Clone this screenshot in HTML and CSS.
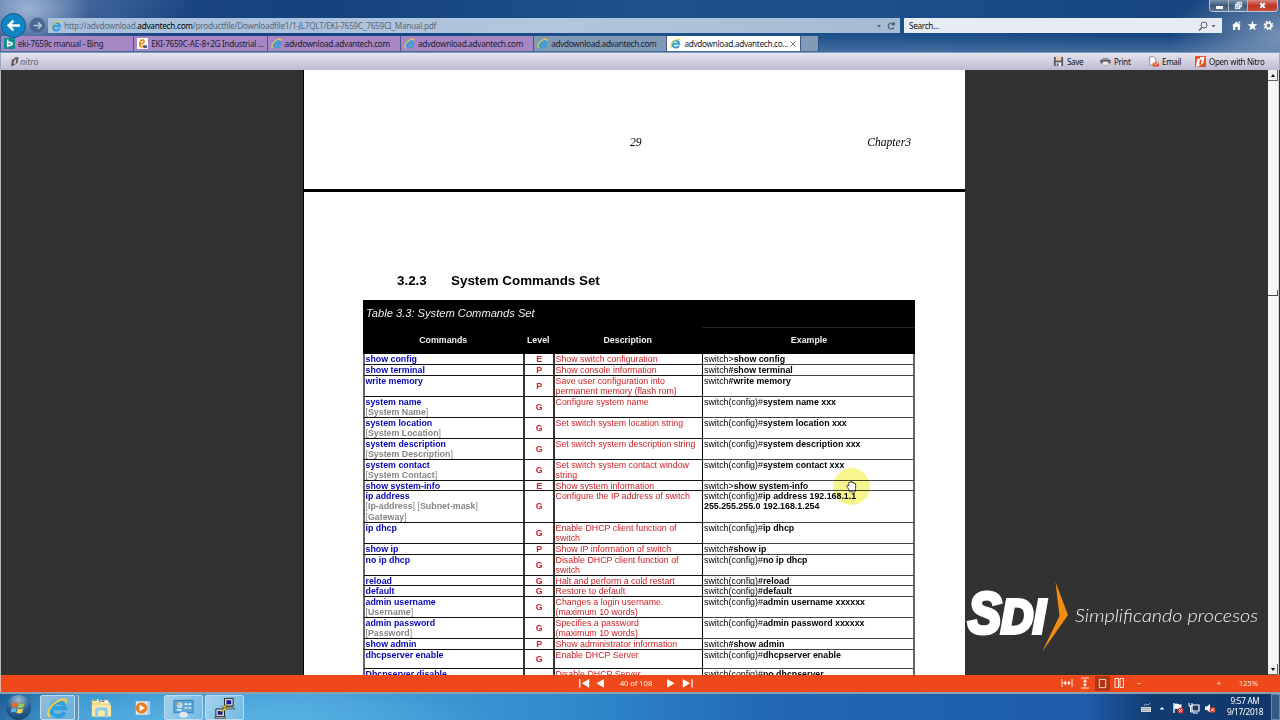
FILE: index.html
```html
<!DOCTYPE html>
<html lang="en">
<head>
  <meta charset="UTF-8" />
  <title>advdownload.advantech.com</title>
  <link rel="stylesheet" href="styles.css">
</head>
<body>
  <svg class="defs" width="0" height="0">
    <symbol id="ie" viewBox="0 0 24 24">
      <path d="M19.500 16.500a7.500 7.500 0 1 1 .6-4.200H7" fill="none" stroke="#2f9fdd" stroke-width="4.400"/>
      <path d="M4 21.500C-1 20 3 10 10.500 5.500 16 2 23 .5 21.500 6.500" fill="none" stroke="#f2cf45" stroke-width="2.300"/>
    </symbol>
    <symbol id="page-bars" viewBox="0 0 12 12">
      <path d="M5.500 1h5L9 8l-2.500 1L7.500 4H5zM2.500 3h3l-1 6H7l-3.500 2.500H1z" fill="currentColor"/>
    </symbol>
  </svg>

  <header class="chrome">
    <div class="caption">
      <div class="window-buttons">
        <span class="min"><i></i></span>
        <span class="restore"><svg viewBox="0 0 10 10"><path d="M3.500 1.500h5v5h-5zM1.500 3.500h5v5h-5z" fill="#8fa1b5" stroke="#fff"/></svg></span>
        <span class="close"><svg viewBox="0 0 10 10"><path d="M2.500 2.500l5 5m0-5l-5 5" stroke="#fff" stroke-width="2"/></svg></span>
      </div>
    </div>
    <div class="nav">
      <span class="back"><svg viewBox="0 0 24 24"><path d="M21 12H5m7-7l-7 7 7 7" fill="none" stroke="#fff" stroke-width="3.400"/></svg></span>
      <span class="forward"><svg viewBox="0 0 16 16"><path d="M4 8h8M8.500 4.500L12 8l-3.500 3.500" fill="none" stroke="#b9c9df" stroke-width="1.600"/></svg></span>
      <div class="address">
        <svg class="ie"><use href="#ie"/></svg>
        <span class="url">http://advdownload.<b>advantech.com</b>/productfile/Downloadfile1/1-JL7QLT/EKI-7659C_7659CI_Manual.pdf</span>
        <svg class="address-tools" viewBox="0 0 20 12"><path d="M1 5h4L3 7.500z" fill="#4c5a6a"/><path d="M17.500 4A3 3 0 1 0 18 7.200M18.200 2v2.700h-2.700" fill="none" stroke="#4c5a6a" stroke-width="1.200"/></svg>
      </div>
      <div class="search">
        <span>Search...</span>
        <svg viewBox="0 0 20 12"><circle cx="7" cy="5" r="3" fill="none" stroke="#56606b"/><path d="M5 7.500L2 10.500" stroke="#56606b" stroke-width="1.400"/><path d="M14.500 5h4l-2 2.500z" fill="#56606b"/></svg>
      </div>
      <div class="tools">
        <svg viewBox="0 0 12 12"><path d="M6 1.500l5 4.700H9.700V11H7.300V7.500H4.700V11H2.300V6.200H1zM8.500 1.500h1.500v2.500l-1.500-1z" fill="#fff"/></svg>
        <svg viewBox="0 0 12 12"><path d="M6 .8l1.400 3.700 4 .2-3.100 2.500 1 3.900L6 8.900l-3.300 2.200 1-3.900L.6 4.700l4-.2z" fill="#fff"/></svg>
        <svg viewBox="0 0 12 12"><circle cx="6" cy="6" r="4.500" fill="none" stroke="#fff" stroke-width="1.500" stroke-dasharray="1.800 1.734"/><circle cx="6" cy="6" r="3" fill="none" stroke="#fff" stroke-width="1.800"/></svg>
      </div>
    </div>
    <div class="tabs">
      <div class="tab"><svg viewBox="0 0 12 12"><path d="M0 0h12v12H0z" fill="#108b8b"/><path d="M4 1.500v7.300L8.800 7V5.500L5 4.500" fill="none" stroke="#fff" stroke-width="1.700"/></svg><span>eki-7659c manual - Bing</span></div>
      <div class="tab"><svg viewBox="0 0 12 12"><path d="M0 0h12v12H0z" fill="#fff"/><path d="M3 6.500C8 7 9 2 6 2S1.500 9 5 9.500c2 .2 3-1 4-1.500" fill="none" stroke="#ee8d16" stroke-width="1.800"/><path d="M7 8h4v3H7z" fill="#45608c"/></svg><span>EKI-7659C-AE-8+2G Industrial ...</span></div>
      <div class="tab"><svg><use href="#ie"/></svg><span>advdownload.advantech.com</span></div>
      <div class="tab"><svg><use href="#ie"/></svg><span>advdownload.advantech.com</span></div>
      <div class="tab other"><svg><use href="#ie"/></svg><span>advdownload.advantech.com</span></div>
      <div class="tab active"><svg><use href="#ie"/></svg><span>advdownload.advantech.co...</span><svg class="x" viewBox="0 0 8 8"><path d="M1.500 1.500l5 5m0-5l-5 5" stroke="#777"/></svg></div>
      <div class="new-tab"></div>
    </div>
  </header>

  <div class="nitro-bar">
    <svg class="nitro-logo"><use href="#page-bars"/></svg>
    <em>nitro</em>
    <div class="actions">
      <span class="save"><svg viewBox="0 0 12 12"><path d="M1 1h10v10H1z" fill="#5c5a60"/><path d="M3 1h6v4H3z" fill="#efc9a8"/><path d="M3 7h6v4H3z" fill="#f5f3f5"/><path d="M4 8h2v3H4z" fill="#5c5a60"/></svg>Save</span>
      <span class="print"><svg viewBox="0 0 12 12"><path d="M3 2h6v2H3z" fill="#999"/><path d="M.5 4h11v4h-11z" fill="#55535a"/><path d="M3 6h6v4H3z" fill="#f3eee8" stroke="#a88"  stroke-width=".5"/></svg>Print</span>
      <span class="email"><svg viewBox="0 0 12 12"><path d="M2 .8h4l2.500 2.500V10H2z" fill="#fff" stroke="#77737a" stroke-width=".8"/><path d="M5 7h7v4.500H5z" fill="#ef5125"/><path d="M5 7l3.500 2.500L12 7" fill="none" stroke="#fff" stroke-width=".7"/></svg>Email</span>
      <span class="open"><svg class="nitro-square"><use href="#page-bars"/></svg>Open with Nitro</span>
    </div>
  </div>

  <main class="viewer">
    <div class="document">
      <section class="page page-end"><span>29</span><span class="chapter">Chapter3</span></section>
      <section class="page page-start">
        <h1><span>3.2.3</span>System Commands Set</h1>
        <div class="commands">
          <div class="table-title">Table 3.3: System Commands Set</div>
          <div class="row head"><div>Commands</div><div>Level</div><div>Description</div><div>Example</div></div>
          <div class="row one"><div><b>show config</b></div><div>E</div><div>Show switch configuration</div><div>switch&gt;<b>show config</b></div></div>
          <div class="row one"><div><b>show terminal</b></div><div>P</div><div>Show console information</div><div>switch<b>#show terminal</b></div></div>
          <div class="row two"><div><b>write memory</b></div><div>P</div><div>Save user configuration into<br>permanent memory (flash rom)</div><div>switch<b>#write memory</b></div></div>
          <div class="row two"><div><b>system name</b><br>[<i>System Name</i>]</div><div>G</div><div>Configure system name</div><div>switch(config)#<b>system name xxx</b></div></div>
          <div class="row two"><div><b>system location</b><br>[<i>System Location</i>]</div><div>G</div><div>Set switch system location string</div><div>switch(config)#<b>system location xxx</b></div></div>
          <div class="row two"><div><b>system description</b><br>[<i>System Description</i>]</div><div>G</div><div>Set switch system description string</div><div>switch(config)#<b>system description xxx</b></div></div>
          <div class="row two"><div><b>system contact</b><br>[<i>System Contact</i>]</div><div>G</div><div>Set switch system contact window<br>string</div><div>switch(config)#<b>system contact xxx</b></div></div>
          <div class="row one short"><div><b>show system-info</b></div><div>E</div><div>Show system information</div><div>switch&gt;<b>show system-info</b></div></div>
          <div class="row three"><div><b>ip address</b><br>[<i>Ip-address</i>] [<i>Subnet-mask</i>]<br>[<i>Gateway</i>]</div><div>G</div><div>Configure the IP address of switch</div><div>switch(config)<b>#ip address 192.168.1.1<br>255.255.255.0 192.168.1.254</b></div></div>
          <div class="row two"><div><b>ip dhcp</b></div><div>G</div><div>Enable DHCP client function of<br>switch</div><div>switch(config)#<b>ip dhcp</b></div></div>
          <div class="row one"><div><b>show ip</b></div><div>P</div><div>Show IP information of switch</div><div>switch<b>#show ip</b></div></div>
          <div class="row two"><div><b>no ip dhcp</b></div><div>G</div><div>Disable DHCP client function of<br>switch</div><div>switch(config)#<b>no ip dhcp</b></div></div>
          <div class="row one short"><div><b>reload</b></div><div>G</div><div>Halt and perform a cold restart</div><div>switch(config)<b>#reload</b></div></div>
          <div class="row one"><div><b>default</b></div><div>G</div><div>Restore to default</div><div>switch(config)<b>#default</b></div></div>
          <div class="row two"><div><b>admin username</b><br>[<i>Username</i>]</div><div>G</div><div>Changes a login username.<br>(maximum 10 words)</div><div>switch(config)#<b>admin username xxxxxx</b></div></div>
          <div class="row two"><div><b>admin password</b><br>[<i>Password</i>]</div><div>G</div><div>Specifies a password<br>(maximum 10 words)</div><div>switch(config)#<b>admin password xxxxxx</b></div></div>
          <div class="row one"><div><b>show admin</b></div><div>P</div><div>Show administrator information</div><div>switch<b>#show admin</b></div></div>
          <div class="row mid"><div><b>dhcpserver enable</b></div><div>G</div><div>Enable DHCP Server</div><div>switch(config)#<b>dhcpserver enable</b></div></div>
          <div class="row two"><div><b>Dhcpserver disable</b></div><div>G</div><div>Disable DHCP Server</div><div>switch(config)#<b>no dhcpserver</b></div></div>
        </div>
      </section>
    </div>
    <div class="scrollbar">
      <span class="arrow up"></span>
      <span class="thumb"></span>
      <span class="arrow down"></span>
    </div>
    <div class="cursor">
      <svg viewBox="0 0 12 12"><path d="M2.500 7L1.500 5.200l1-.7 1 1V2.300h1.600V1.500h1.500v.8h1.700v1h1.500V8L9.300 11H4.500z" fill="#fff" stroke="#333" stroke-width=".8"/></svg>
    </div>
    <svg class="sdi" viewBox="0 0 300 80">
      <g class="sdi-name"><text x="3" y="53" font-size="58" textLength="33" lengthAdjust="spacingAndGlyphs">S</text><text x="36" y="53" font-size="48" textLength="44" lengthAdjust="spacingAndGlyphs">DI</text></g>
      <path d="M90.500 2L103 35 77 72 94.500 36z" fill="#f28c13"/>
      <text class="sdi-tag" x="110" y="42" textLength="183" lengthAdjust="spacingAndGlyphs">Simplificando procesos</text>
    </svg>
  </main>

  <div class="pager">
    <div class="pages">
      <svg viewBox="0 0 30 12"><path d="M1 1h1.300v9.500H1zM12 1v9.500L4 5.800zM28 1v9.500l-8-4.700z" fill="#fff"/></svg>
      <span>40 of 108</span>
      <svg viewBox="0 0 30 12"><path d="M1 1l8 4.800-8 4.700zM18 1l8 4.800-8 4.700zM27.500 1h1.300v9.500h-1.300z" fill="#fff"/></svg>
    </div>
    <div class="zoom">
      <svg viewBox="0 0 12 12"><path d="M1 2v8M11 2v8M3 6h6" stroke="#ffe3d6"/><path d="M5 3.500v5L2 6zM7 3.500v5L10 6z" fill="#ffe3d6"/></svg>
      <svg viewBox="0 0 12 12"><path d="M2 1h8M2 11h8M6 3v6" stroke="#ffe3d6"/><path d="M3.800 5h4.400L6 2zM3.800 7h4.400L6 10z" fill="#ffe3d6"/></svg>
      <span class="single"><svg viewBox="0 0 12 12"><path d="M2.500 1.500h7v9h-7z" fill="none" stroke="#ffe3d6"/></svg></span>
      <svg viewBox="0 0 12 12"><path d="M2 1.500h3.500v9H2zM7 1.500h3.500v9H7z" fill="none" stroke="#ffe3d6"/></svg>
      <span class="minus">−</span>
      <span class="plus">+</span>
      <span class="percent">125%</span>
    </div>
  </div>

  <footer class="taskbar">
    <span class="start"><svg viewBox="0 0 24 24"><path d="M3.500 6.500q4-3 7.500-1l-1.500 6q-3-1-7 1z" fill="#e96a2d"/><path d="M12.500 6q4 2 8-.5l-1.500 6q-4 2-8 .5z" fill="#9bcb4a"/><path d="M2 14q4-2.500 7.200-1l-1.700 6q-3-1.500-7 .5z" fill="#5eb2ec"/><path d="M10.700 13.500q4 2 8 0l-1.700 6q-4 2-8 0z" fill="#f8d34d"/></svg></span>
    <span class="task ie-task"><svg><use href="#ie"/></svg></span>
    <span class="task plain"><svg viewBox="0 0 24 22"><path d="M2 3h7l1 2h11v14H2z" fill="#efd884"/><path d="M4 2h5v3H4zM11 3h8v3h-8z" fill="#fdfbe8"/><path d="M4 3h3" stroke="#3b9b42" stroke-width="1.500"/><path d="M12 4h3" stroke="#c44" stroke-width="1.500"/><path d="M2 8h20v12H2z" fill="#f8e8a6"/><path d="M7 21v-7q0-2 2-2h6q2 0 2 2v7" fill="none" stroke="#8fc9ec" stroke-width="3"/></svg></span>
    <span class="task plain"><svg viewBox="0 0 24 22"><path d="M8 4h12v14H8z" fill="#a7d3ef"/><path d="M5 4h12v14H5z" fill="#d6e7f1"/><circle cx="11" cy="11" r="6" fill="#ee7f22"/><path d="M9 7.500v7l5.500-3.500z" fill="#fff"/></svg></span>
    <span class="task"><svg viewBox="0 0 24 22"><path d="M2 3h20v13H2z" fill="#5aa4d8" stroke="#397eb4"/><circle cx="8" cy="8" r="3" fill="#bfe2f6"/><path d="M8 8V5a3 3 0 0 0-3 3z" fill="#f5a83a"/><path d="M13 7h3m1 0h3M13 11h3m1 0h3M5 13h5" stroke="#d7effb" stroke-width="1.700"/><ellipse cx="12" cy="18" rx="4.500" ry="3" fill="#e4e7e7"/></svg></span>
    <span class="task"><svg viewBox="0 0 24 22"><path d="M12 1h9v8h-9zM3 12h9v8H3z" fill="#d9d9d0" stroke="#222"/><path d="M14 3h5v4h-5zM5 14h5v4H5z" fill="#14149c"/><path d="M11 10h10l2 2H12zM2 20h11v1.800H2z" fill="#bbb" stroke="#222" stroke-width=".6"/><path d="M15 7l-6 3 3 1-5 5 8-4-3-1z" fill="#ffea24" stroke="#555500" stroke-width=".5"/></svg></span>
    <div class="tray">
      <svg viewBox="0 0 12 12"><path d="M1 5h10v5H1z" fill="#cdd4da"/><path d="M2 6.500h8M2 8.300h8" stroke="#77828f" stroke-width=".8" stroke-dasharray="1 .6"/><path d="M4 4q1-3 3-1.500T10 1" fill="none" stroke="#8fabc8"/></svg>
      <svg viewBox="0 0 12 12"><path d="M3.500 7.500h5L6 5z" fill="#fff"/></svg>
      <svg viewBox="0 0 12 12"><path d="M2 1v10" stroke="#fff" stroke-width="1.300"/><path d="M2.500 2q2-1 4 0t3 0v5q-2 .5-3.500 0T2.500 7z" fill="#fff"/><circle cx="8.500" cy="8.500" r="3" fill="#d93a32"/><path d="M7.200 7.200l2.600 2.600m0-2.600L7.200 9.800" stroke="#fff"/></svg>
      <svg viewBox="0 0 12 12"><path d="M4 3h7v6H4zM5 11h5" fill="#173c6c" stroke="#fff" stroke-width="1.200"/><path d="M1 1v3h3V1M2.500 4v6H6" fill="none" stroke="#fff"/></svg>
      <svg viewBox="0 0 12 12"><path d="M1 4.500h2L6 2v8.500L3 8H1z" fill="#fff"/><circle cx="8.500" cy="8" r="3" fill="#d93a32"/><path d="M7.200 6.700l2.600 2.600m0-2.600L7.200 9.300" stroke="#fff"/></svg>
    </div>
    <div class="clock">9:57 AM<br>9/17/2018</div>
    <span class="show-desktop"></span>
  </footer>
</body>
</html>
```

FILE: styles.css
```css
* {
  box-sizing: border-box;
}
body {
  margin: 0;
  width: 1280px;
  height: 720px;
  overflow: hidden;
  display: flex;
  flex-direction: column;
  font-family: "Noto Sans", sans-serif;
  font-size: 8.2px;
  letter-spacing: -.3px;
  color: #111;
}
svg {
  display: block;
  flex: none;
}
.defs {
  position: absolute;
}

/* browser chrome */
.chrome {
  height: 53px;
  flex: none;
  display: flex;
  flex-direction: column;
  background:
    radial-gradient(ellipse 60px 36px at 28px 10px, rgba(180, 200, 225, .75), transparent),
    radial-gradient(ellipse 180px 60px at 20px 0, rgba(130, 160, 200, .6), transparent),
    radial-gradient(ellipse 110px 55px at 1280px 35px, rgba(150, 172, 200, .75), transparent),
    linear-gradient(transparent 35px, rgba(95, 130, 175, .6)),
    linear-gradient(90deg, #1c4583, #16427f 25%, #1d528c 50%, #1b4f8a 70%, #15427c);
  border-bottom: 1px solid #7f9cbd;
}
.caption {
  height: 16px;
  display: flex;
  justify-content: flex-end;
  padding-right: 2px;
}
.window-buttons {
  display: flex;
  width: 69px;
  height: 12px;
  border: 1px solid #b9c7d6;
  border-top: 0;
  border-radius: 0 0 4px 4px;
  overflow: hidden;
}
.window-buttons span {
  display: flex;
  align-items: center;
  justify-content: center;
  width: 19px;
  background: linear-gradient(#8095ae, #3e5a7c 50%, #5a7797);
  border-right: 1px solid #aab8c8;
}
.window-buttons .close {
  flex: 1;
  border: 0;
  background: linear-gradient(#d58b80, #bf3526 50%, #c84b36);
}
.window-buttons svg {
  width: 9px;
  height: 9px;
}
.min i {
  width: 7px;
  height: 3px;
  margin-top: 3px;
  background: #fff;
}
.nav {
  height: 19px;
  display: flex;
  align-items: center;
}
.back {
  width: 25px;
  height: 25px;
  margin: 0 3px 0 1px;
  padding: 3px;
  border-radius: 50%;
  background: #1186c4;
  border: 1px solid #14568c;
  z-index: 1;
}
.forward {
  width: 17px;
  height: 17px;
  margin-right: 2px;
  border-radius: 50%;
  border: 1px solid #6c87ad;
  background: #49678f;
}
.address {
  display: flex;
  align-items: center;
  width: 852px;
  height: 15px;
  padding: 0 4px 0 2px;
  background: linear-gradient(90deg, #a9c0dc, #b1c6dd 60%, #a6bcd4);
}
.ie {
  width: 12px;
  height: 12px;
}
.url {
  flex: 1;
  padding-left: 2px;
  color: #5d6876;
  letter-spacing: -.26px;
}
.url b {
  font-weight: normal;
  color: #000;
}
.address-tools {
  width: 20px;
  height: 12px;
}
.search {
  display: flex;
  align-items: center;
  justify-content: space-between;
  width: 318px;
  height: 15px;
  margin-left: 4px;
  padding: 0 5px;
  background: #e6ecf2;
}
.search svg {
  width: 20px;
  height: 12px;
}
.tools {
  display: flex;
  gap: 5px;
  margin-left: 9px;
}
.tools svg {
  width: 11px;
  height: 11px;
}
.tabs {
  display: flex;
  height: 17px;
  padding: 1px 0 1px 1px;
}
.tab {
  display: flex;
  align-items: center;
  width: 133.3px;
  height: 15px;
  padding-left: 3px;
  background: #a787c3;
  border-right: 1px solid #4b5687;
  color: #202030;
  white-space: nowrap;
}
.tab svg {
  width: 11px;
  height: 11px;
  margin-right: 3px;
}
.tab.other,
.new-tab {
  background: #8099b5;
}
.tab.active {
  background: #fff;
}
.tab .x {
  width: 8px;
  height: 8px;
  margin: 0 3px 0 auto;
}
.new-tab {
  width: 18px;
  height: 15px;
  border-right: 1px solid #294d7e;
}

/* plugin toolbar */
.nitro-bar {
  display: flex;
  flex: none;
  align-items: center;
  height: 17px;
  padding-left: 9px;
  background: linear-gradient(#e6e4ef, #d2d0e0 50%, #bdbbd2);
  border-left: 1px solid #9cabc0;
  border-right: 1px solid #9cabc0;
}
.nitro-logo {
  width: 10px;
  height: 11px;
  color: #626068;
}
.nitro-bar em {
  color: #626068;
  font-size: 9px;
  letter-spacing: -.1px;
}
.actions {
  display: flex;
  margin-left: auto;
}
.actions span {
  display: flex;
  align-items: center;
  font-size: 8px;
}
.actions svg {
  width: 11px;
  height: 11px;
  margin-right: 3px;
}
.save { width: 47px; }
.print { width: 48px; }
.email { width: 47px; }
.open { width: 84px; white-space: nowrap; }
.actions .nitro-square {
  background: #e8501f;
  color: #fff;
}

/* pdf pages */
.viewer {
  position: relative;
  flex: none;
  display: flex;
  height: 605px;
  background: #323232;
  border-left: 1px solid #b5b9bd;
}
.document {
  width: 662px;
  height: 605px;
  margin-left: 302px;
  overflow: hidden;
  background: #000;
  color: #000;
  font-family: "Liberation Sans", sans-serif;
  letter-spacing: 0;
}
.page {
  background: #fff;
  margin-left: 1px;
}
.page-end {
  display: flex;
  height: 119px;
  margin-bottom: 3px;
  padding: 66px 54px 0 326px;
  justify-content: space-between;
  font: italic 11.6px/14px "Liberation Serif", serif;
}
.page-start {
  height: 560px;
  padding: 81px 0 0 59px;
}
h1 {
  display: flex;
  margin: 0 0 11px 34px;
  font-size: 13.4px;
  line-height: 16px;
}
h1 span {
  width: 54px;
}
.commands {
  width: 552px;
  font-size: 8.83px;
  line-height: 10.4px;
}
.table-title {
  height: 27px;
  padding: 6px 3px;
  background: #000;
  color: #eee;
  font: italic 11.15px/15px "Liberation Sans", sans-serif;
}
.row {
  display: grid;
  grid-template-columns: 160px 30px 149px 213px;
}
.row > div {
  white-space: nowrap;
  overflow: hidden;
  border-bottom: 1.5px solid #111;
  border-left: 2px solid #333;
  padding-left: .5px;
}
.row > div:nth-child(1) {
  color: #858585;
  border-left-color: #666;
}
.row > div:nth-child(1) b {
  color: #0606b4;
}
.row i {
  font-style: normal;
  font-weight: bold;
}
.row > div:nth-child(2) {
  display: grid;
  place-items: center;
  color: #cf2025;
  font-weight: bold;
}
.row > div:nth-child(3) {
  color: #cf2025;
}
.row > div:nth-child(4) {
  padding-left: 1px;
  border-left: 1px solid #000;
  border-right: 2px solid #666;
  border-bottom-color: #444;
}
.row.head > div:nth-child(n) {
  display: block;
  height: 27px;
  border: 0;
  background: #000;
  color: #eee;
  text-align: center;
  line-height: 27px;
  font-weight: bold;
}
.row.head > div:nth-child(4) {
  border-top: 1px solid #252525;
  line-height: 25px;
}
.one { height: 11px; }
.short { height: 10px; }
.two { height: 21px; }
.mid { height: 19px; }
.three { height: 32px; }

.scrollbar {
  display: flex;
  flex-direction: column;
  width: 11px;
  margin-left: auto;
  margin-right: 1px;
  background: #f7f7f7;
  border-right: 1px solid #d5d5d5;
}
.arrow {
  display: flex;
  align-items: center;
  justify-content: center;
  height: 11px;
  background: #f1f1f1;
  border-right: 1px solid #666;
  border-bottom: 1px solid #666;
}
.arrow::before {
  content: "";
  border: 2.5px solid transparent;
  border-top: 0;
  border-bottom: 3px solid #000;
}
.down {
  margin-top: auto;
}
.down::before {
  transform: rotate(180deg);
}
.thumb {
  height: 6px;
  margin-top: 209px;
  border-right: 1px solid #555;
  border-bottom: 1px solid #444;
}
.cursor {
  position: absolute;
  left: 832px;
  top: 398px;
  width: 37px;
  height: 37px;
  padding: 12px;
  border-radius: 50%;
  background: #f8f58e;
  mix-blend-mode: multiply;
}
.cursor svg {
  width: 13px;
  height: 13px;
}
.sdi {
  position: absolute;
  left: 964px;
  top: 510px;
  width: 300px;
  height: 80px;
}
.sdi-name {
  font-family: "Liberation Sans", sans-serif;
  font-weight: bold;
  font-style: italic;
  fill: #fff;
  stroke: #fff;
  stroke-width: 4px;
}
.sdi-tag {
  font: italic 300 17.5px Lato, sans-serif;
  letter-spacing: 0;
  fill: #f4f4f4;
}

.pager {
  position: relative;
  flex: none;
  height: 17px;
  background: #ef481b;
  border-left: 1px solid #e5b4a7;
  color: #ffe9df;
  font-size: 7.8px;
  letter-spacing: -.15px;
}
.pages {
  display: flex;
  align-items: center;
  height: 16px;
  margin-left: 577px;
}
.pages span {
  width: 60px;
  text-align: center;
}
.pages svg {
  width: 28px;
  height: 11px;
}
.zoom {
  position: absolute;
  right: 22px;
  top: 0;
  display: flex;
  align-items: center;
  height: 16px;
}
.zoom svg {
  width: 12px;
  height: 12px;
  margin-right: 6px;
}
.zoom .single {
  height: 15px;
  padding: 2px;
  margin: 0 3px 0 -2px;
  background: #ad3415;
}
.zoom .single svg {
  width: 11px;
  height: 11px;
  margin: 0;
}
.minus {
  width: 80px;
  margin-left: 6px;
}
.plus {
  width: 22px;
}

/* desktop taskbar */
.taskbar {
  display: flex;
  flex: none;
  height: 28px;
  padding-top: 1px;
  border-top: 2px solid #8ba0b1;
  background:
    radial-gradient(ellipse 300px 40px at 200px 28px, rgba(100, 190, 235, .7), transparent),
    linear-gradient(90deg, #17568f, #3690cc 6%, #4aa2d9 24%, #2f89cb 45%, #2268b4 60%, #1d5ca8 85%, #123b70 90%, #0f376a);
}
.start {
  width: 25px;
  height: 25px;
  margin: 0 9px 0 6px;
  padding: 4px;
  border-radius: 50%;
  background: radial-gradient(circle at 50% 20%, #9dbbd0, #255b8b 55%, #133d65);
}
.task {
  display: flex;
  align-items: center;
  justify-content: center;
  width: 39px;
  height: 25px;
  margin-right: 2px;
  border: 1px solid #c0dcef;
  border-radius: 2px;
  background: linear-gradient(135deg, rgba(255, 255, 255, .5), rgba(255, 255, 255, .15));
}
.task svg {
  width: 23px;
  height: 22px;
}
.ie-task {
  width: 35px;
  margin-right: 7px;
  box-shadow: 3px 0 0 #5794bf, 4px 0 0 #c0dcef;
}
.plain {
  border-color: transparent;
  background: none;
}
.tray {
  display: flex;
  align-items: center;
  gap: 4px;
  margin-left: auto;
}
.tray svg {
  width: 12px;
  height: 12px;
}
.tray svg:last-child {
  margin-right: 4px;
}
.clock {
  width: 50px;
  margin-right: 1px;
  text-align: center;
  font-size: 8.2px;
  line-height: 11.3px;
  color: #fff;
}
.show-desktop {
  width: 9px;
  margin-top: -1px;
  border: 1px solid #6c88a8;
  background: #345a84;
}
```
